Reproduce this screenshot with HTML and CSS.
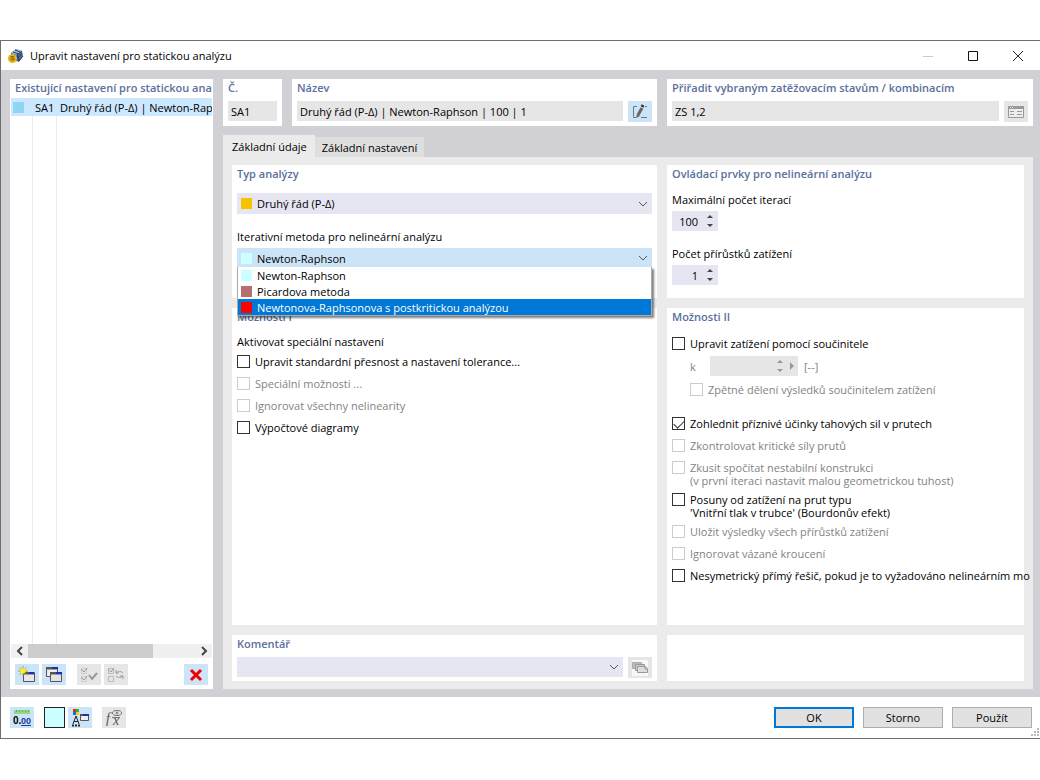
FILE: index.html
```html
<!DOCTYPE html>
<html lang="cs">
<head>
    <meta charset="UTF-8">
    <meta name="viewport" content="width=device-width, initial-scale=1.0">
    <title>Upravit nastavení pro statickou analýzu</title>
    <link rel="stylesheet" href="styles.css">
</head>
<body>
    <main class="window">
        <header class="titlebar">
            <svg class="app-icon" width="16" height="16" viewBox="0 0 16 16">
                <path d="M3 5 8 1l6 2 1 5-4 6-8-3z" fill="#4a689a"/>
                <path d="M3 5 8 1l6 2-5 4z" fill="#a9bddb"/>
                <path d="M5 4l6 2M7 2l5 2M9 7l5-4M10 10l4-5M11 13l4-5M9 7l2 6" stroke="#263c64" fill="none"/>
                <circle cx="4.500" cy="10.500" r="4.500" fill="#e1b51f"/>
                <path d="M6 8.500H3v3.500h3v-2H4" stroke="#856510" fill="none"/>
            </svg>
            <h1>Upravit nastavení pro statickou analýzu</h1>
            <button class="win-btn" aria-label="Minimalizovat" disabled>
                <svg width="12" height="12"><path d="M1 6.500h10" stroke="#ccc"/></svg>
            </button>
            <button class="win-btn" aria-label="Maximalizovat">
                <svg width="12" height="12"><path d="M1.500 1.500h9v9h-9z" stroke="#111" fill="none"/></svg>
            </button>
            <button class="win-btn" aria-label="Zavřít">
                <svg width="12" height="12"><path d="M1 1l10 10M11 1 1 11" stroke="#222" fill="none"/></svg>
            </button>
        </header>

        <div class="content">
            <section class="sidebar">
                <h2>Existující nastavení pro statickou ana</h2>
                <div class="list">
                    <div class="list-row">
                        <span class="list-color"><i class="swatch sky"></i></span>
                        <span class="list-id">SA1</span>
                        <span class="list-name">Druhý řád (P-Δ) | Newton-Raph</span>
                    </div>
                </div>
                <div class="scrollbar">
                    <button class="scroll-btn" aria-label="Posunout vlevo">
                        <svg width="8" height="10"><path d="M6 1 2 5l4 4" stroke="#444" stroke-width="2" fill="none"/></svg>
                    </button>
                    <div class="scroll-track"><div class="scroll-thumb"></div></div>
                    <button class="scroll-btn" aria-label="Posunout vpravo">
                        <svg width="8" height="10"><path d="M2 1l4 4-4 4" stroke="#444" stroke-width="2" fill="none"/></svg>
                    </button>
                </div>
                <div class="toolbar">
                    <button class="icon-btn" aria-label="Nové nastavení">
                        <svg width="18" height="18" viewBox="0 0 18 18">
                            <path d="M5.500 6.500h11v9h-11z" fill="#e8e8e8" stroke="#555"/>
                            <path d="M6 6h10v2.500H6z" fill="#555"/><path d="M11 6h5v2h-5z" fill="#1730b8"/>
                            <path d="M5 0v10M0 5h10M1.500 1.500l7 7M8.500 1.500l-7 7" stroke="#b0a428"/>
                            <circle cx="5" cy="5" r="2.500" fill="#fff11a"/>
                        </svg>
                    </button>
                    <button class="icon-btn" aria-label="Kopírovat nastavení">
                        <svg width="18" height="18" viewBox="0 0 18 18">
                            <path d="M1.500 1.500h11v9h-11z" fill="#eee" stroke="#555"/>
                            <path d="M1 1h12v2.500H1z" fill="#555"/><path d="M7 1h6v2H7z" fill="#1730b8"/>
                            <path d="M5.500 6.500h11v9h-11z" fill="#e4e4e4" stroke="#555"/>
                            <path d="M5 6h12v2.500H5z" fill="#555"/><path d="M11 6h6v2h-6z" fill="#1730b8"/>
                        </svg>
                    </button>
                    <button class="icon-btn group-start" aria-label="Vybrat vše" disabled>
                        <svg width="18" height="18" viewBox="0 0 18 18" fill="none" stroke="#999">
                            <path d="M1.500 2.500h5v5h-5zM1.500 10.500h5v5h-5z" stroke="#ccc"/>
                            <path d="M1 3l3 3 3-4M1 11l3 3 3-4"/><path d="M9 9l3 4 5-6" stroke-width="2"/>
                        </svg>
                    </button>
                    <button class="icon-btn" aria-label="Obrátit výběr" disabled>
                        <svg width="18" height="18" viewBox="0 0 18 18" fill="none" stroke="#999">
                            <path d="M1.500 2.500h5v5h-5zM1.500 10.500h5v5h-5z" stroke="#bbb"/>
                            <path d="M1 3l3 3 3-4"/><path d="M9 7c2-2 5-2 7 0M16 10c-2 2-5 2-7 0M9 4v3h3M16 13v-3h-3"/>
                        </svg>
                    </button>
                    <button class="icon-btn delete" aria-label="Smazat">
                        <svg width="14" height="14"><path d="M2 2l10 10M12 2 2 12" stroke="#f00000" stroke-width="3"/></svg>
                    </button>
                </div>
            </section>

            <div class="editor">
                <div class="summary">
                    <div class="card">
                        <label class="heading" for="number">Č.</label>
                        <input class="field" id="number" value="SA1" readonly>
                    </div>
                    <div class="card">
                        <label class="heading" for="name">Název</label>
                        <div class="field-row">
                            <input class="field" id="name" value="Druhý řád (P-Δ) | Newton-Raphson | 100 | 1" readonly>
                            <button class="icon-btn" aria-label="Upravit název">
                                <svg width="18" height="16" viewBox="0 0 18 16" fill="none" stroke="#777">
                                    <path d="M6 2.500H2.500v11H5M10 13.500h6M14 2.500h2"/>
                                    <path d="M7 11l4-7" stroke="#666" stroke-width="3"/><path d="M5 14l1-4 3 2z" fill="#666" stroke="none"/>
                                    <path d="M11 3l1-2" stroke="#333" stroke-width="3"/>
                                </svg>
                            </button>
                        </div>
                    </div>
                    <div class="card">
                        <label class="heading" for="assign">Přiřadit vybraným zatěžovacím stavům / kombinacím</label>
                        <div class="field-row">
                            <input class="field" id="assign" value="ZS 1,2" readonly>
                            <button class="icon-btn" aria-label="Vybrat zatěžovací stavy" disabled>
                                <svg width="18" height="14" viewBox="0 0 18 14">
                                    <path d="M1.500 1.500h15v11h-15z" fill="#eee" stroke="#999"/>
                                    <path d="M1 1h16v3H1z" fill="#999"/>
                                    <path d="M3 6.500h4M10 6.500h5M3 9.500h4M10 9.500h5" stroke="#999"/>
                                    <path d="M3 2.500h1M5 2.500h1" stroke="#eee"/>
                                </svg>
                            </button>
                        </div>
                    </div>
                </div>

                <nav class="tabs" role="tablist">
                    <button class="tab active" role="tab" aria-selected="true">Základní údaje</button>
                    <button class="tab" role="tab" aria-selected="false">Základní nastavení</button>
                </nav>

                <div class="panels">
                    <section class="card">
                        <h2>Typ analýzy</h2>
                        <div class="combo first">
                            <i class="swatch yellow"></i>
                            <select aria-label="Typ analýzy">
                                <option>Druhý řád (P-Δ)</option>
                            </select>
                            <svg class="chevron" width="10" height="6"><path d="M1 1l4 4 4-4" stroke="#555" fill="none"/></svg>
                        </div>
                        <label class="label" for="method">Iterativní metoda pro nelineární analýzu</label>
                        <div class="combo open">
                            <i class="swatch cyan"></i>
                            <select id="method">
                                <option>Newton-Raphson</option>
                                <option>Picardova metoda</option>
                                <option>Newtonova-Raphsonova s postkritickou analýzou</option>
                            </select>
                            <svg class="chevron" width="10" height="6"><path d="M1 1l4 4 4-4" stroke="#555" fill="none"/></svg>
                            <ul class="dropdown" role="listbox" aria-label="Iterativní metoda">
                                <li role="option"><i class="swatch cyan"></i>Newton-Raphson</li>
                                <li role="option"><i class="swatch brown"></i>Picardova metoda</li>
                                <li role="option" class="selected" aria-selected="true"><i class="swatch red"></i>Newtonova-Raphsonova s postkritickou analýzou</li>
                            </ul>
                        </div>
                    </section>

                    <section class="card">
                        <h2>Ovládací prvky pro nelineární analýzu</h2>
                        <label class="label" for="iterations">Maximální počet iterací</label>
                        <div class="spin">
                            <input type="number" id="iterations" value="100">
                            <svg class="arrows" width="8" height="14"><path d="M4 1l3 3H1zM4 13l3-3H1z"/></svg>
                        </div>
                        <label class="label" for="increments">Počet přírůstků zatížení</label>
                        <div class="spin">
                            <input type="number" id="increments" value="1">
                            <svg class="arrows" width="8" height="14"><path d="M4 1l3 3H1zM4 13l3-3H1z"/></svg>
                        </div>
                    </section>

                    <section class="card">
                        <h2>Možnosti I</h2>
                        <p class="subtitle">Aktivovat speciální nastavení</p>
                        <label class="check"><input type="checkbox"><span>Upravit standardní přesnost a nastavení tolerance...</span></label>
                        <label class="check"><input type="checkbox" disabled><span>Speciální možnosti ...</span></label>
                        <label class="check"><input type="checkbox" disabled><span>Ignorovat všechny nelinearity</span></label>
                        <label class="check"><input type="checkbox"><span>Výpočtové diagramy</span></label>
                    </section>

                    <section class="card">
                        <h2>Možnosti II</h2>
                        <div class="load-factor">
                            <label class="check"><input type="checkbox"><span>Upravit zatížení pomocí součinitele</span></label>
                            <div class="factor-row">
                                <label for="factor">k</label>
                                <div class="spin wide">
                                    <input type="number" id="factor" disabled>
                                    <svg class="arrows" width="8" height="14"><path d="M4 1l3 3H1zM4 13l3-3H1z"/></svg>
                                    <svg class="arrows" width="5" height="8"><path d="M1 0l4 4-4 4z"/></svg>
                                </div>
                                <span>[--]</span>
                            </div>
                            <label class="check nested"><input type="checkbox" disabled><span>Zpětné dělení výsledků součinitelem zatížení</span></label>
                        </div>
                        <label class="check"><input type="checkbox" checked><span>Zohlednit příznivé účinky tahových sil v prutech</span></label>
                        <label class="check"><input type="checkbox" disabled><span>Zkontrolovat kritické síly prutů</span></label>
                        <label class="check"><input type="checkbox" disabled><span>Zkusit spočítat nestabilní konstrukci<br>(v první iteraci nastavit malou geometrickou tuhost)</span></label>
                        <label class="check"><input type="checkbox"><span>Posuny od zatížení na prut typu<br>'Vnitřní tlak v trubce' (Bourdonův efekt)</span></label>
                        <label class="check"><input type="checkbox" disabled><span>Uložit výsledky všech přírůstků zatížení</span></label>
                        <label class="check"><input type="checkbox" disabled><span>Ignorovat vázané kroucení</span></label>
                        <label class="check"><input type="checkbox"><span>Nesymetrický přímý řešič, pokud je to vyžadováno nelineárním mo</span></label>
                    </section>

                    <section class="card">
                        <label class="heading" for="comment">Komentář</label>
                        <div class="field-row">
                            <div class="combo">
                                <select id="comment"><option></option></select>
                                <svg class="chevron" width="10" height="6"><path d="M1 1l4 4 4-4" stroke="#555" fill="none"/></svg>
                            </div>
                            <button class="icon-btn" aria-label="Převzít komentář" disabled>
                                <svg width="16" height="16" viewBox="0 0 16 16">
                                    <path d="M0 0h16v16H0z" fill="#f8f8f8"/>
                                    <path d="M.500 2.500h9l1 6h-10z" fill="#bbb" stroke="#aaa"/>
                                    <path d="M3.500 4.500h9v6h-9z" fill="#ccc" stroke="#999"/>
                                    <path d="M5.500 6.500h8l2 2v4h-10z" fill="#ddd" stroke="#999"/>
                                    <path d="M13 7v2h2" stroke="#999" fill="none"/>
                                </svg>
                            </button>
                        </div>
                    </section>
                    <section class="card"></section>
                </div>
            </div>
        </div>

        <footer class="footer">
            <button class="icon-btn" aria-label="Jednotky a desetinná místa">
                <svg width="18" height="18" viewBox="0 0 18 18">
                    <path d="M1 1h16v4H1z" fill="#92d888"/>
                    <path d="M3.500 1v2M6.500 1v2M9.500 1v2M12.500 1v2M15.500 1v2" stroke="#5fae56"/>
                    <text class="units-text" x="0" y="15">0.</text>
                    <text class="units-text blue" x="8" y="15">00</text>
                    <path d="M8 16.500h10" stroke="#1d3f95"/>
                </svg>
            </button>
            <button class="color-btn" aria-label="Barva"></button>
            <button class="icon-btn" aria-label="Nastavení zobrazení">
                <svg width="18" height="18" viewBox="0 0 18 18">
                    <path d="M2 0h3v3H2z" fill="#e22"/><path d="M5 0h3v3H5z" fill="#2b3"/>
                    <path d="M2 3h3v3H2z" fill="#26d"/><path d="M5 3h3v3H5z" fill="#fc0"/>
                    <path d="M2 15 5 7l3 8M3 12.500h4" stroke="#222" fill="none"/>
                    <path d="M1 16.500h9" stroke="#222" stroke-width="2" stroke-dasharray="2 1"/>
                    <path d="M9.500 5.500h8v6h-8z" fill="#eee" stroke="#555"/><path d="M9 5h9v2H9z" fill="#555"/>
                    <path d="M12 5h6v2h-6z" fill="#1730b8"/>
                </svg>
            </button>
            <button class="icon-btn formula" aria-label="Vzorec" disabled>
                <svg width="18" height="18" viewBox="0 0 18 18">
                    <g fill="none" stroke="#777">
                        <ellipse cx="12" cy="4" rx="4.500" ry="2.500"/><circle cx="12" cy="4" r="1"/>
                        <path d="M7 8.500h8"/>
                    </g>
                    <text class="formula-text" x="1" y="14">f</text>
                    <text class="formula-text" x="8" y="16">x</text>
                </svg>
            </button>
            <div class="actions">
                <button class="btn primary">OK</button>
                <button class="btn">Storno</button>
                <button class="btn">Použít</button>
            </div>
            <svg class="grip" width="8" height="8"><path d="M6 0h2v2H6zM3 3h2v2H3zM6 3h2v2H6zM0 6h2v2H0zM3 6h2v2H3zM6 6h2v2H6z" fill="#bbb"/></svg>
        </footer>
    </main>
</body>
</html>
```
FILE: styles.css
```css
* {
    box-sizing: border-box;
}
body {
    margin: 0;
    padding: 40px 0 41px;
    min-height: 100vh;
    display: flex;
    background: white;
    color: #000;
    font-family: "Open Sans", "Noto Sans", sans-serif;
    font-size: 11px;
    line-height: 13px;
}
button, input, select {
    font: inherit;
    color: inherit;
    margin: 0;
    padding: 0;
    border: none;
    border-radius: 0;
    background: none;
}
svg {
    display: block;
    flex: none;
}
.window {
    flex: 1;
    min-width: 0;
    display: flex;
    flex-direction: column;
    border: 1px solid #6e6e6e;
    border-right: none;
}

/* title bar */
.titlebar {
    display: flex;
    align-items: center;
    height: 29px;
    padding-left: 7px;
}
.titlebar h1 {
    flex: 1;
    margin: 0 0 0 6px;
    font-size: 11px;
    font-weight: normal;
}
.win-btn {
    width: 45px;
    height: 29px;
    display: flex;
    align-items: center;
    justify-content: center;
}

/* main area */
.content {
    flex: 1;
    display: flex;
    gap: 10px;
    padding: 9px 7px 8px 9px;
    background: #d0d0d5;
}
h2, .heading {
    display: block;
    margin: 0 0 4px;
    height: 18px;
    font-size: 11px;
    line-height: 18px;
    font-weight: 600;
    color: #5a6f9c;
    white-space: nowrap;
}
.sidebar {
    width: 203px;
    display: flex;
    flex-direction: column;
    padding: 0 1px 4px;
    background: white;
}
.sidebar h2 {
    margin: 0 0 1px 4px;
}
.list {
    flex: 1;
    background: linear-gradient(#ececec, #ececec) 21px 0 / 1px 100% no-repeat,
        linear-gradient(#ececec, #ececec) 45px 0 / 1px 100% no-repeat;
}
.list-row {
    display: flex;
    align-items: center;
    height: 18px;
    background: #cce8ff;
    white-space: nowrap;
    overflow: hidden;
}
.list-color {
    flex: none;
    width: 21px;
    padding-left: 2px;
}
.list-id {
    flex: none;
    width: 24px;
    padding-left: 3px;
}
.list-name {
    padding-left: 4px;
}
.swatch {
    display: block;
    flex: none;
    width: 11px;
    height: 11px;
}
.sky {
    background: #8fd6f5;
}
.yellow {
    background: #f7c300;
}
.cyan {
    background: #ccffff;
}
.brown {
    background: #b86e6e;
}
.red {
    background: #ff0000;
}
.scrollbar {
    display: flex;
    height: 14px;
    background: #f0f0f0;
}
.scroll-btn {
    width: 17px;
    display: flex;
    align-items: center;
    justify-content: center;
}
.scroll-track {
    flex: 1;
}
.scroll-thumb {
    width: 75%;
    height: 14px;
    background: #cdcdcd;
}
.toolbar {
    display: flex;
    gap: 3px;
    padding: 6px 4px 0;
}
.icon-btn {
    flex: none;
    width: 24px;
    height: 21px;
    display: flex;
    align-items: center;
    justify-content: center;
    background: #cce4f7;
}
.icon-btn:disabled {
    background: #e6e6e6;
}
.group-start {
    margin-left: 8px;
}
.delete {
    margin-left: auto;
}

/* right side */
.editor {
    flex: 1;
    min-width: 0;
    display: flex;
    flex-direction: column;
}
.summary {
    display: grid;
    grid-template-columns: 59px minmax(0, 365fr) minmax(0, 366fr);
    gap: 10px;
}
.card {
    min-width: 0;
    padding: 0 5px 5px;
    background: white;
}
.field-row {
    display: flex;
    gap: 5px;
    height: 20px;
}
.field {
    flex: 1;
    width: 100%;
    min-width: 0;
    height: 20px;
    padding: 0 3px;
    background: #e6e6e6;
}
.tabs {
    display: flex;
    align-items: flex-end;
    margin-top: 9px;
}
.tab {
    height: 20px;
    padding: 0 7px;
    background: #dedede;
}
.tab.active {
    height: 22px;
    padding: 0 8px 0 9px;
    background: #ebebeb;
}
.panels {
    flex: 1;
    display: grid;
    grid-template-columns: minmax(0, 425fr) minmax(0, 357fr);
    grid-template-rows: 133px 1fr 46px;
    gap: 10px;
    padding: 8px 9px;
    background: #ebebeb;
}
.combo {
    position: relative;
    flex: 1;
    display: flex;
    align-items: center;
    height: 20px;
    padding: 0 4px;
    background: #e6e6f2;
}
.combo.first {
    height: 21px;
    margin: 10px 0 16px;
}
.combo.open {
    background: #cce4f7;
}
.combo select {
    flex: 1;
    min-width: 0;
    height: 20px;
    padding-left: 5px;
    appearance: none;
    outline: none;
}
.dropdown {
    position: absolute;
    z-index: 1;
    top: 19px;
    left: 0;
    right: 0;
    margin: 0;
    padding: 0;
    list-style: none;
    background: white;
    border: 1px solid #aaa;
    border-top: none;
    box-shadow: 2px 2px 2px rgba(0, 0, 0, 0.5);
}
.dropdown li {
    display: flex;
    align-items: center;
    gap: 5px;
    height: 16px;
    padding-left: 3px;
}
.dropdown .selected {
    background: #0078d7;
    color: white;
}
.label {
    display: block;
    margin: 10px 0 5px;
}
.spin {
    display: flex;
    align-items: center;
    width: 46px;
    height: 20px;
    margin-bottom: 16px;
    padding-right: 4px;
    background: #e6e6f2;
}
.spin input {
    flex: 1;
    min-width: 0;
    padding-right: 8px;
    text-align: right;
    appearance: textfield;
}
.spin input::-webkit-inner-spin-button {
    appearance: none;
    display: none;
}
.arrows {
    fill: #444;
}
.subtitle {
    margin: 9px 0 7px;
}
.check {
    display: flex;
    gap: 5px;
    min-height: 22px;
    padding-bottom: 6px;
    white-space: nowrap;
}
.check input {
    appearance: none;
    flex: none;
    display: flex;
    justify-content: center;
    width: 13px;
    height: 13px;
    border: 1px solid #333;
    background: white;
}
.check input:checked::before {
    content: "";
    width: 9px;
    height: 5px;
    margin-top: 2px;
    border: 1px solid #333;
    border-width: 0 0 1px 1px;
    transform: rotate(-45deg);
}
.check input:disabled {
    border-color: #ccc;
}
.check input:disabled + span {
    color: #838383;
}
.load-factor {
    margin: 11px 0 12px;
}
.factor-row {
    display: flex;
    align-items: center;
    height: 20px;
    margin: -3px 0 7px 18px;
    color: #838383;
}
.factor-row label {
    width: 20px;
}
.spin.wide {
    width: 88px;
    gap: 5px;
    margin: 0 6px 0 0;
    background: #e6e6e6;
}
.wide .arrows {
    fill: #999;
}
.nested {
    margin-left: 18px;
}

/* footer */
.footer {
    position: relative;
    display: flex;
    align-items: center;
    height: 41px;
    padding: 0 8px 0 9px;
}
.color-btn {
    width: 21px;
    height: 21px;
    margin: 0 3px 0 10px;
    background: #ccffff;
    border: 1px solid #222;
}
.formula {
    margin-left: 10px;
}
.units-text {
    font-size: 10px;
    font-weight: bold;
    font-family: "Liberation Sans", Arial, sans-serif;
}
.units-text.blue {
    font-size: 9px;
    fill: #1d3f95;
}
.formula-text {
    font: italic 14px "Liberation Serif", serif;
    fill: #555;
}
.actions {
    display: flex;
    gap: 9px;
    margin-left: auto;
}
.btn {
    width: 80px;
    height: 21px;
    background: #e1e1e1;
    border: 1px solid #adadad;
}
.btn.primary {
    border: 2px solid #0078d7;
}
.grip {
    position: absolute;
    right: 1px;
    bottom: 2px;
}
```
